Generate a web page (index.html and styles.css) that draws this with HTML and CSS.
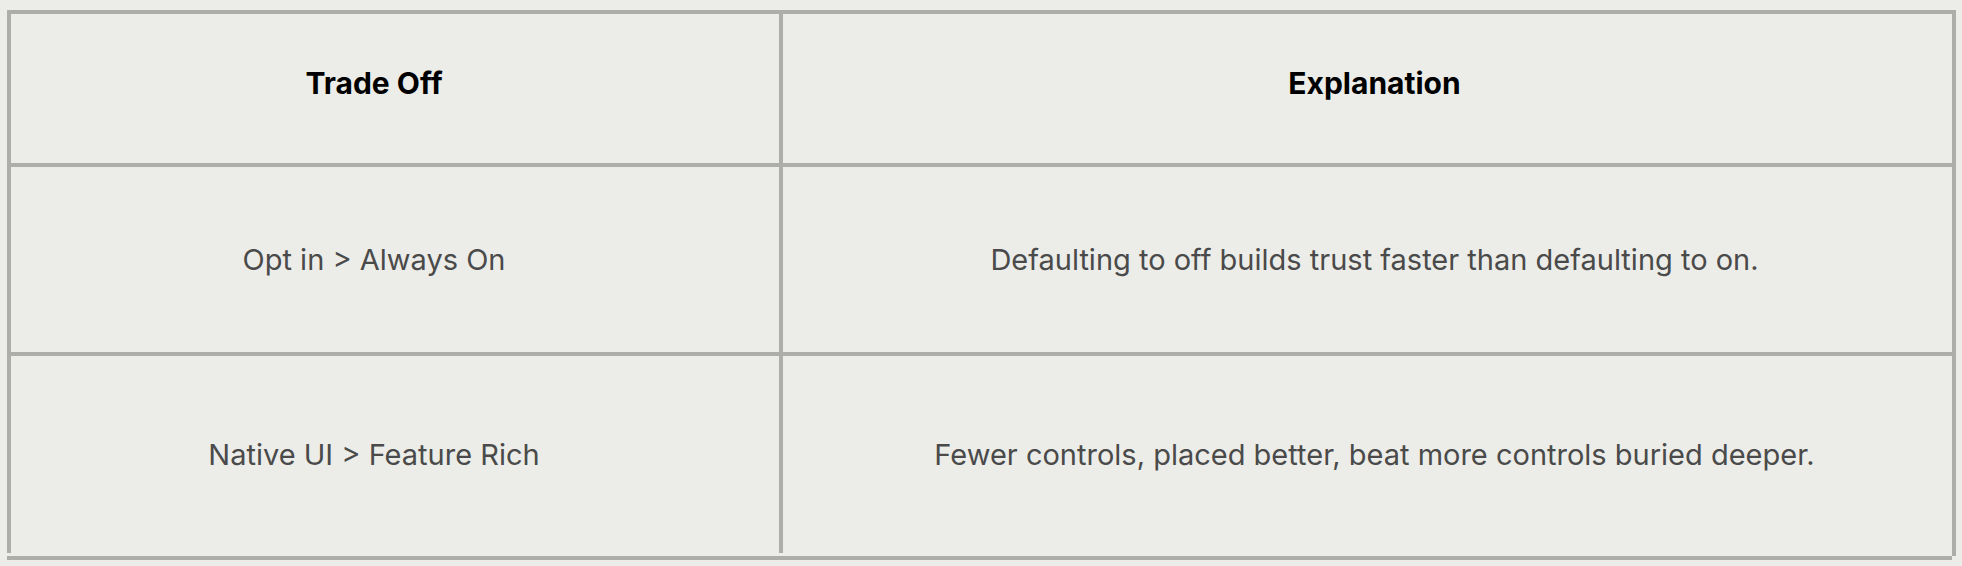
FILE: index.html
```html
<!DOCTYPE html>
<html lang="en">
<head>
<meta charset="utf-8">
<title>Trade Offs</title>
<link rel="stylesheet" href="styles.css">
</head>
<body>
<div class="table">
  <div class="cell head left">Trade Off</div>
  <div class="cell head right">Explanation</div>
  <div class="cell body left r1">Opt in &gt; Always On</div>
  <div class="cell body right r1">Defaulting to off builds trust faster than defaulting to on.</div>
  <div class="cell body left r2">Native UI &gt; Feature Rich</div>
  <div class="cell body right r2">Fewer controls, placed better, beat more controls buried deeper.</div>
  <div class="tail"></div>
  <div class="base"></div>
</div>
</body>
</html>
```

FILE: styles.css
```css
html, body {
  margin: 0;
  padding: 0;
  background: #ecede8;
}
body {
  font-family: Inter, "Open Sans", sans-serif;
  padding: 10px 0 0 7px;
  overflow: hidden;
}
.table {
  display: grid;
  grid-template-columns: 772px 1177px;
  grid-template-rows: 153px 189px 201px 3px 4px;
  width: 1949px;
}
.cell {
  display: flex;
  align-items: center;
  justify-content: center;
  border-top: 4px solid #adadaa;
  border-left: 4px solid #adadaa;
  font-size: 29px;
  box-sizing: border-box;
  white-space: nowrap;
}
.cell.right {
  border-right: 4px solid #adadaa;
}
.head {
  font-weight: 700;
  font-size: 30px;
  color: #000;
  padding-bottom: 11px;
}
.head.left { padding-right: 42px; }
.body {
  color: #4a4a4a;
  font-weight: 400;
}
.body.left { padding-right: 42px; }
.body.right, .head.right { padding-left: 14px; }
.tail {
  grid-column: 1 / -1;
  border-right: 4px solid #adadaa;
}
.base {
  grid-column: 1 / -1;
  width: 1945px;
  background: #adadaa;
}
```
